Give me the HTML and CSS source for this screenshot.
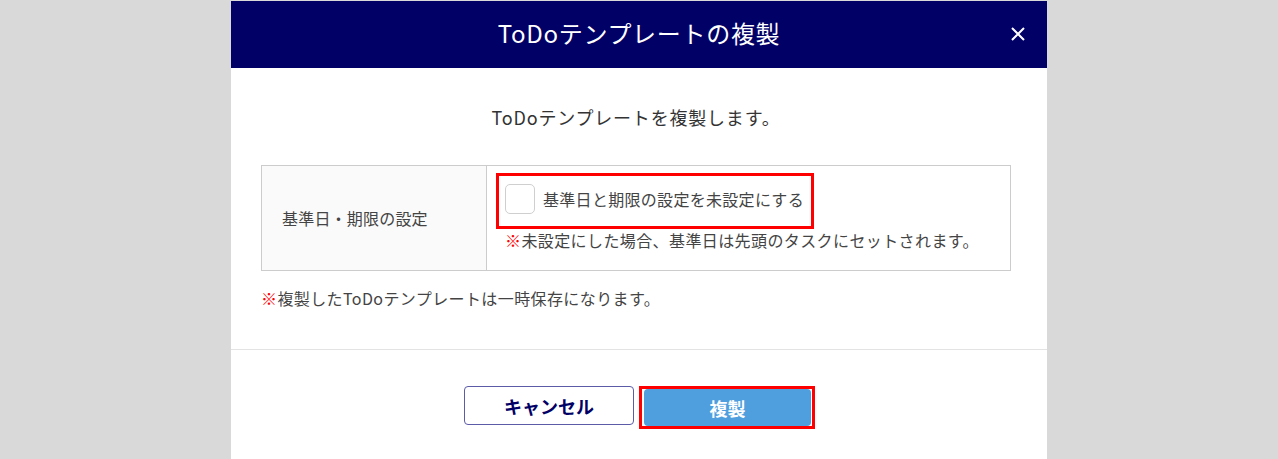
FILE: index.html
```html
<!DOCTYPE html>
<html lang="ja">
<head>
<meta charset="utf-8">
<title>ToDoテンプレートの複製</title>
<link rel="stylesheet" href="styles.css">
</head>
<body>
<div class="modal">
  <div class="modal-header">
    <h1 class="modal-title">ToDoテンプレートの複製</h1>
    <button class="close" aria-label="閉じる">
      <svg width="16" height="16" viewBox="0 0 16 16"><path d="M2 2 L14 14 M14 2 L2 14" stroke="#fff" stroke-width="2" fill="none"/></svg>
    </button>
  </div>
  <div class="modal-body">
    <p class="lead">ToDoテンプレートを複製します。</p>
    <div class="form-table">
      <div class="label-cell">基準日・期限の設定</div>
      <div class="value-cell">
        <label class="check-row">
          <span class="checkbox"></span>
          <span>基準日と期限の設定を未設定にする</span>
        </label>
        <p class="note"><span class="mark">※</span>未設定にした場合、基準日は先頭のタスクにセットされます。</p>
      </div>
    </div>
    <p class="foot-note"><span class="mark">※</span>複製したToDoテンプレートは一時保存になります。</p>
  </div>
  <div class="modal-footer">
    <button class="btn btn-cancel">キャンセル</button>
    <button class="btn btn-copy">複製</button>
  </div>
</div>
</body>
</html>
```
FILE: styles.css
```css
html, body {
  margin: 0;
  padding: 0;
}
body {
  background: #d9d9d9;
  font-family: "Noto Sans CJK JP", "Noto Sans", sans-serif;
  color: #444;
  height: 459px;
  overflow: hidden;
}
.modal {
  margin: 1px 0 0 231px;
  width: 816px;
  background: #fff;
  min-height: 470px;
}
.modal-header {
  height: 67px;
  background: #000066;
  display: flex;
  align-items: center;
  justify-content: center;
  position: relative;
}
.modal-title {
  margin: 0 0 3px;
  color: #fff;
  font-weight: 400;
  font-size: 24px;
  line-height: 30px;
  letter-spacing: 0.7px;
}
.close {
  position: absolute;
  right: 20px;
  top: 24px;
  width: 18px;
  height: 18px;
  padding: 0;
  border: 0;
  background: none;
  display: flex;
  align-items: center;
  justify-content: center;
}
.modal-body {
  padding: 37px 36px 41px 30px;
  border-bottom: 1px solid #e3e3e3;
}
.lead {
  margin: 0 0 36px;
  text-align: center;
  font-size: 18px;
  line-height: 24px;
  letter-spacing: 0.8px;
  color: #333;
}
.form-table {
  display: grid;
  grid-template-columns: 225px 1fr;
  border: 1px solid #cccccc;
}
.label-cell {
  background: #fafafa;
  border-right: 1px solid #cccccc;
  display: flex;
  align-items: center;
  padding-left: 20px;
  font-size: 16px;
  letter-spacing: 0.2px;
  color: #444;
}
.value-cell {
  padding: 18px 0 20px 18px;
}
.check-row {
  display: inline-flex;
  align-items: center;
  gap: 8px;
  height: 30px;
  font-size: 16px;
  letter-spacing: 0.3px;
  color: #444;
  position: relative;
}
.check-row::after {
  content: "";
  position: absolute;
  left: -9px;
  right: -10px;
  top: -11px;
  bottom: -15px;
  border: 3px solid #ff0000;
}
.checkbox {
  width: 28px;
  height: 28px;
  border: 1px solid #cfcfcf;
  border-radius: 5px;
  background: #fff;
}
.note {
  margin: 11px 0 0;
  font-size: 16px;
  line-height: 20px;
  letter-spacing: 0.4px;
  color: #444;
}
.mark {
  color: #ff0000;
}
.foot-note {
  margin: 17px 0 0;
  font-size: 16px;
  line-height: 20px;
  letter-spacing: 0.4px;
  color: #444;
}
.modal-footer {
  padding: 36px 3px 0 0;
  display: flex;
  justify-content: center;
  align-items: flex-start;
  gap: 10px;
}
.btn {
  font-family: "Noto Sans CJK JP", "Noto Sans", sans-serif;
  font-weight: 700;
  font-size: 18px;
  border-radius: 4px;
  padding: 0;
  cursor: pointer;
}
.btn-cancel {
  width: 170px;
  height: 39px;
  background: #fff;
  border: 1px solid #5b5ba8;
  color: #000066;
}
.btn-copy {
  width: 167px;
  height: 37px;
  margin-top: 3px;
  background: #4f9ede;
  border: 0;
  color: #fff;
  position: relative;
}
.btn-copy::after {
  content: "";
  position: absolute;
  left: -5px;
  right: -4px;
  top: -3px;
  bottom: -3px;
  border: 3px solid #ff0000;
}
```
